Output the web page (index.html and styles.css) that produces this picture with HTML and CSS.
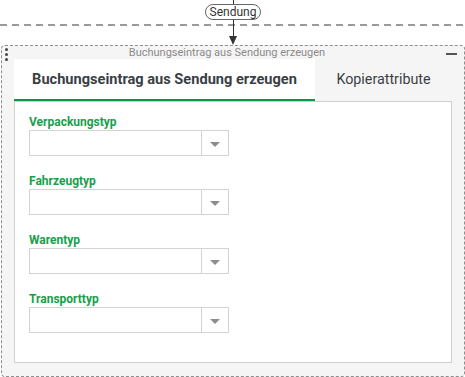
FILE: index.html
```html
<!DOCTYPE html>
<html lang="de">
<head>
<meta charset="utf-8">
<title>Buchungseintrag</title>
<link rel="stylesheet" href="styles.css">
</head>
<body>
<div class="top">
  <div class="hline"></div>
  <div class="vline vline-a"></div>
  <div class="pill">Sendung</div>
  <div class="vline vline-b"></div>
  <div class="arrow"></div>
</div>
<div class="box">
  <div class="box-head">
    <div class="dots"><span></span><span></span><span></span></div>
    <div class="box-title">Buchungseintrag aus Sendung erzeugen</div>
    <div class="minus"></div>
  </div>
  <div class="tabs">
    <div class="tab tab-active">Buchungseintrag aus Sendung erzeugen</div>
    <div class="tab">Kopierattribute</div>
  </div>
  <div class="panel">
    <div class="field">
      <div class="label">Verpackungstyp</div>
      <div class="select"><div class="select-val"></div><div class="select-btn"><span class="caret"></span></div></div>
    </div>
    <div class="field">
      <div class="label">Fahrzeugtyp</div>
      <div class="select"><div class="select-val"></div><div class="select-btn"><span class="caret"></span></div></div>
    </div>
    <div class="field">
      <div class="label">Warentyp</div>
      <div class="select"><div class="select-val"></div><div class="select-btn"><span class="caret"></span></div></div>
    </div>
    <div class="field">
      <div class="label">Transporttyp</div>
      <div class="select"><div class="select-val"></div><div class="select-btn"><span class="caret"></span></div></div>
    </div>
  </div>
</div>
</body>
</html>
```

FILE: styles.css
```css
* { box-sizing: border-box; }
html, body { margin: 0; padding: 0; background: #fff; }
body {
  font-family: Roboto, "Liberation Sans", Arial, sans-serif;
  width: 465px;
  height: 377px;
  overflow: hidden;
}

.top {
  position: relative;
  height: 45px;
  display: flex;
  flex-direction: column;
  align-items: center;
  padding-left: 1px;
}
.hline {
  position: absolute;
  left: 0;
  right: 0;
  top: 24px;
  height: 2px;
  background: repeating-linear-gradient(90deg, #9a9a9a 0 7px, transparent 7px 12px);
}
.vline {
  width: 1px;
  background: #333;
  position: relative;
}
.vline-a { height: 4px; }
.vline-b { height: 16px; }
.pill {
  position: relative;
  height: 16px;
  padding: 0 4px;
  border: 1px solid #666;
  border-radius: 8px;
  background: #fff;
  font-size: 12px;
  line-height: 14px;
  color: #333;
}
.arrow {
  width: 0;
  height: 0;
  border-left: 4px solid transparent;
  border-right: 4px solid transparent;
  border-top: 9px solid #333;
}

.box {
  margin-left: 1px;
  width: 464px;
  height: 332px;
  border: 1px dashed #8e8e8e;
  border-radius: 4px;
  background: #f5f5f5;
  display: flex;
  flex-direction: column;
  padding: 0 12px 13px 12px;
}
.box-head {
  height: 13px;
  display: flex;
  align-items: flex-start;
  margin: 0 -5px 0 -9px;
}
.dots {
  display: flex;
  flex-direction: column;
  gap: 2px;
  margin-top: 2px;
}
.dots span {
  width: 3px;
  height: 3px;
  border-radius: 50%;
  background: #444;
}
.box-title {
  flex: 1;
  text-align: center;
  font-size: 11px;
  line-height: 13px;
  color: #8a8a8a;
}
.minus {
  width: 11px;
  height: 2px;
  background: #555;
  margin-top: 7px;
}

.tabs {
  display: flex;
  height: 42px;
}
.tab {
  flex: 1;
  display: flex;
  align-items: center;
  justify-content: center;
  font-size: 14.3px;
  color: #3a3f44;
  padding-bottom: 2px;
}
.tab-active {
  flex: 0 0 301px;
  background: #fff;
  font-size: 14.6px;
  font-weight: 700;
  border-bottom: 2px solid #0d9648;
  padding-bottom: 0;
}

.panel {
  flex: 1;
  background: #fff;
  border: 1px solid #cfcfcf;
  border-top-color: #d0d0d0;
  padding: 13px 14px 0 14px;
  display: flex;
  flex-direction: column;
  gap: 18px;
}
.label {
  font-size: 12px;
  line-height: 14px;
  font-weight: 700;
  color: #17a04b;
  margin-bottom: 1px;
}
.select {
  width: 200px;
  height: 26px;
  border: 1px solid #d3d3d3;
  display: flex;
  background: #fff;
}
.select-val { flex: 1; }
.select-btn {
  width: 27px;
  border-left: 1px solid #d3d3d3;
  display: flex;
  align-items: center;
  justify-content: center;
}
.caret {
  width: 0;
  height: 0;
  border-left: 5px solid transparent;
  border-right: 5px solid transparent;
  border-top: 5px solid #8a8e92;
  margin-top: 2px;
}
```
